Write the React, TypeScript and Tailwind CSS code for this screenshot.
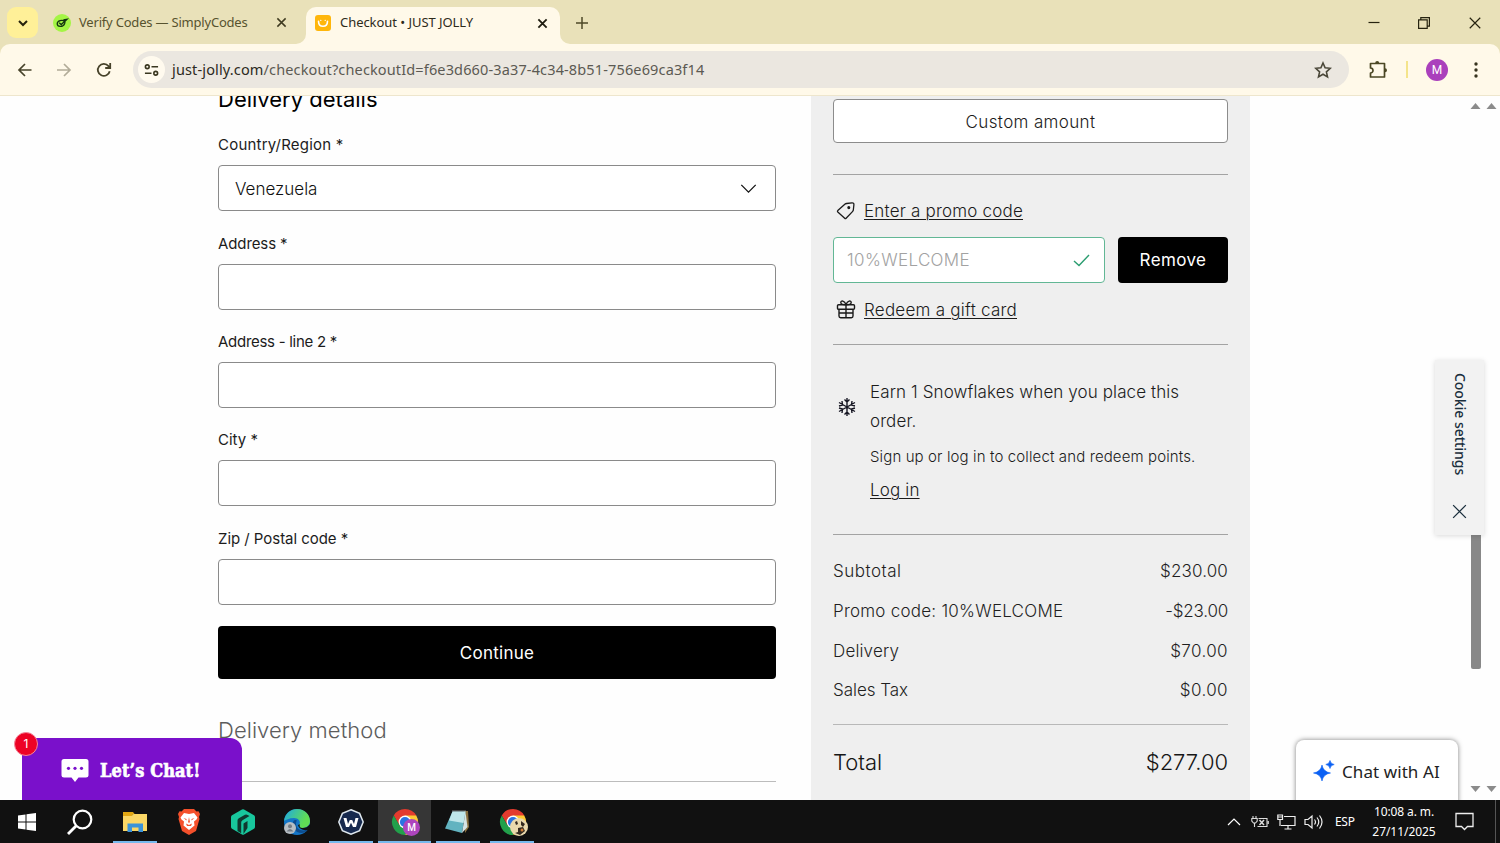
import React from "react";

const ui = "font-['Noto_Sans',sans-serif]";

function CloseX({ className = "", sw = 1.6 }: { className?: string; sw?: number }) {
  return (
    <svg viewBox="0 0 12 12" className={className} fill="none" stroke="currentColor" strokeWidth={sw}>
      <path d="M1.5 1.5l9 9M10.5 1.5l-9 9" />
    </svg>
  );
}

function TabStrip() {
  return (
    <div className={`relative flex h-[44px] shrink-0 items-center bg-[#e9e1b9] pl-[7px] pt-px ${ui}`}>
      <div className="flex h-[31px] w-[31px] items-center justify-center rounded-[9px] bg-[#fff098]">
        <svg viewBox="0 0 12 12" className="h-3 w-3" fill="none" stroke="#26220c" strokeWidth="2"><path d="M2 4l4 4 4-4" /></svg>
      </div>
      <svg viewBox="0 0 18 18" className="ml-[15px] h-[18px] w-[18px]">
        <circle cx="9" cy="9" r="9" fill="#a4f545" />
        <path d="M11.800 7.500C9.500 5.200 4.200 6.600 4.200 9.800c0 3.300 5.800 3.600 7.300.2.500-1 .6-1.600.3-2.500zM6.200 8.800l2 1.800 5.800-5.300-3.600.6M12 7.200l2-1.900" fill="none" stroke="#143510" strokeWidth="1.300" />
      </svg>
      <span className="ml-[8px] w-[191px] whitespace-nowrap text-[13px] tracking-[-0.2px] text-[#57532f]">Verify Codes — SimplyCodes</span>
      <CloseX className="ml-[6px] h-[11px] w-[11px] text-[#3f3b20]" />
      <div className="relative ml-[19px] flex h-[37px] w-[254px] items-center self-end rounded-t-[10px] bg-[#fff9e9] pl-[9px]">
        <svg viewBox="0 0 10 10" className="absolute bottom-0 left-[-10px] h-[10px] w-[10px]"><path d="M10 0v10H0A10 10 0 0 0 10 0z" fill="#fff9e9" /></svg>
        <svg viewBox="0 0 10 10" className="absolute bottom-0 right-[-10px] h-[10px] w-[10px]"><path d="M0 0v10h10A10 10 0 0 1 0 0z" fill="#fff9e9" /></svg>
        <div className="flex w-full items-center pb-[5px]">
          <svg viewBox="0 0 16 16" className="h-4 w-4">
            <rect width="16" height="16" rx="3" fill="#ffb60a" />
            <path d="M3.500 6.200c.2 6.800 8.800 6.800 9 0" fill="none" stroke="#fff" strokeWidth="1.600" strokeLinecap="round" />
            <path d="M5.700 5.300h.2M10.100 5.300h.2" stroke="#fff" strokeWidth="1.200" strokeLinecap="round" />
          </svg>
          <span className="ml-[9px] w-[190px] whitespace-nowrap text-[13px] tracking-[-0.05px] text-[#2e2b1a]">Checkout • JUST JOLLY</span>
          <CloseX className="ml-[7px] h-[11px] w-[11px] text-[#1f1d10]" sw={2} />
        </div>
      </div>
      <svg viewBox="0 0 12 12" className="ml-[16px] h-3 w-3" stroke="#4d4827" strokeWidth="1.500"><path d="M6 0v12M0 6h12" /></svg>
      <div className="ml-auto flex items-center pr-[18px] text-[#26230f]">
        <svg viewBox="0 0 12 12" className="h-3 w-3" stroke="currentColor"><path d="M0.500 5.500h11" strokeWidth="1.200" /></svg>
        <svg viewBox="0 0 12 12" className="ml-[38px] h-3 w-3" fill="none" stroke="currentColor" strokeWidth="1.200"><path d="M.6 2.800h8.600v8.600H.6zM2.800 2.800V.6h8.600v8.600H9.200" /></svg>
        <CloseX className="ml-[38px] h-[14px] w-[14px]" sw={1} />
      </div>
    </div>
  );
}

function Toolbar() {
  return (
    <div className="shrink-0 bg-[#e9e1b9]">
      <div className={`flex h-[52px] items-center rounded-t-[10px] border-b border-[#eee6cd] bg-[#fff9e9] pl-[17px] pr-[15px] ${ui}`}>
        <svg viewBox="0 0 16 16" className="h-4 w-4" fill="none" stroke="#47432a" strokeWidth="1.700"><path d="M14.500 8H2M8 2L2 8l6 6" /></svg>
        <svg viewBox="0 0 16 16" className="ml-[23px] h-4 w-4" fill="none" stroke="#b2ac98" strokeWidth="1.700"><path d="M1 8h13M8 2l6 6-6 6" /></svg>
        <svg viewBox="0 0 16 16" className="ml-[24px] h-4 w-4" fill="none" stroke="#47432a" strokeWidth="1.800"><path d="M13.700 9.200A6 6 0 1 1 12.500 4.100L14 5.800M14.200 1v5H9.200" /></svg>
        <div className="ml-[21px] flex h-[37px] w-[1216px] items-center rounded-full bg-[#ebe7e0] pl-[5px] pr-[17px]">
          <div className="flex h-[27px] w-[27px] items-center justify-center rounded-full bg-[#fffaee]">
            <svg viewBox="0 0 16 14" className="h-[14px] w-[15px]" fill="none" stroke="#3a3720" strokeWidth="1.700"><circle cx="3.500" cy="3.500" r="2" /><path d="M8 3.500h7M1 10.500h7" /><circle cx="12.500" cy="10.500" r="2" /></svg>
          </div>
          <span className="ml-[7px] whitespace-nowrap text-[14.5px] tracking-[0.14px] text-[#5c5a53]"><span className="text-[#2c2a22]">just-jolly.com</span>/checkout?checkoutId=f6e3d660-3a37-4c34-8b51-756e69ca3f14</span>
          <svg viewBox="0 0 18 18" className="ml-auto h-[18px] w-[18px]" fill="none" stroke="#4a4738" strokeWidth="1.600"><path d="M9 2l2.100 4.800 5.200.5-3.900 3.500 1.100 5.100L9 13.200l-4.500 2.700 1.100-5.100-3.900-3.500 5.200-.5z" /></svg>
        </div>
        <svg viewBox="0 0 20 20" className="ml-[19px] h-[20px] w-[20px]" fill="none" stroke="#4b4724" strokeWidth="1.700"><path d="M2.500 3.500h14v13.500h-14v-4a2.400 2.400 0 0 0 0-5z" strokeLinejoin="round" /><path d="M7.200 3a2 2 0 0 1 4 0zM17 8.300a2 2 0 0 1 0 4z" fill="#4b4724" stroke="none" /></svg>
        <div className="ml-[18px] h-[17px] w-[2px] bg-[#f4e48b]" />
        <div className="ml-[18px] flex h-[22px] w-[22px] items-center justify-center rounded-full bg-[#aa40bc] font-['Roboto',sans-serif] text-[12px] text-white">M</div>
        <svg viewBox="0 0 4 16" className="ml-auto mr-[7px] h-4 w-1" fill="#37341e"><circle cx="2" cy="2" r="1.700" /><circle cx="2" cy="8" r="1.700" /><circle cx="2" cy="14" r="1.700" /></svg>
      </div>
    </div>
  );
}

function Field({ label, children, track }: { label: string; children?: React.ReactNode; track: string }) {
  return (
    <div className="flex flex-col gap-[10px]">
      <label className={`h-5 whitespace-nowrap text-[15px] leading-5 text-[#1c1c1c] ${track}`}>{label}</label>
      <div className="flex h-[46px] items-center justify-between rounded-[4px] border border-[#8a8a8a] bg-white px-4">{children}</div>
    </div>
  );
}

function DeliveryForm() {
  return (
    <section className="ml-[218px] flex w-[558px] shrink-0 flex-col">
      <h2 className="mt-[-12px] h-[30px] text-[22px] leading-[30px] text-black">Delivery details</h2>
      <div className="mt-[21.4px] flex flex-col gap-[22.3px]">
        <Field label="Country/Region *" track="tracking-[0.22px]">
          <span className="pt-[3px] text-[17px] font-[360] text-[#111]">Venezuela</span>
          <svg viewBox="0 0 18 10" className="mr-[2px] h-[9px] w-[17px]" fill="none" stroke="#111" strokeWidth="1.400"><path d="M1 1l8 8 8-8" /></svg>
        </Field>
        <Field label="Address *" track="tracking-[-0.1px]" />
        <Field label="Address - line 2 *" track="tracking-[-0.28px]" />
        <Field label="City *" track="tracking-[0px]" />
        <Field label="Zip / Postal code *" track="tracking-[-0.04px]" />
      </div>
      <button className="mt-[21.800px] h-[52.500px] shrink-0 rounded-[4px] bg-black pt-[3px] text-[17px] tracking-[0.25px] text-white">Continue</button>
      <h2 className="mt-[36px] h-[30px] text-[22px] font-light leading-[30px] tracking-[0.06px] text-[#5c5c5c]">Delivery method</h2>
      <div className="mt-[36.500px] h-px shrink-0 bg-[#bcbcbc]" />
    </section>
  );
}

function Row({ a, b, ta, tb }: { a: string; b: string; ta: string; tb: string }) {
  return (
    <div className="flex h-[24px] items-center justify-between text-[17px] text-[#1f1f1f]">
      <span className={ta}>{a}</span>
      <span className={tb}>{b}</span>
    </div>
  );
}

function Summary() {
  return (
    <aside className="ml-[35px] flex h-[704px] w-[439px] shrink-0 flex-col bg-[#efefef] px-[22px] pt-[3px] font-[330] text-[#1b1b1b]">
      <button className="h-[44px] shrink-0 rounded-[4px] border border-[#8c8c8c] bg-white pt-[3px] text-[17px] tracking-[0.36px]">Custom amount</button>
      <div className="mt-[31px] h-px shrink-0 bg-[#a3a3a3]" />
      <div className="mt-[24px] flex h-6 items-center pl-[3px] text-[17px]">
        <svg viewBox="0 0 20 20" className="h-[20px] w-[20px]" fill="none" stroke="#1a1a1a" strokeWidth="1.300" strokeLinejoin="round"><path d="M10.500 2.500 16 1.900q2-.1 1.900 1.800l-.6 5.500q-.1.700-.6 1.200l-6.600 6.800q-.7.700-1.400 0L1.800 11q-.7-.7 0-1.400l7.300-6.500q.6-.5 1.400-.6z" /><circle cx="12.800" cy="6.600" r=".9" fill="#1a1a1a" /></svg>
        <span className="ml-[8px] pt-[2px] tracking-[0.2px] underline decoration-1 underline-offset-2">Enter a promo code</span>
      </div>
      <div className="mt-[14px] flex h-[46px] shrink-0 gap-[13px]">
        <div className="flex w-[272px] items-center justify-between rounded-[4px] border border-[#62b795] bg-white pl-[13px] pr-[14px] text-[17px] text-[#a2a2a2]">
          <span className="pt-[2px] tracking-[0.35px]">10%WELCOME</span>
          <svg viewBox="0 0 17 13" className="h-[13px] w-[17px]" fill="none" stroke="#2b9d70" strokeWidth="1.400"><path d="M1 7l5 4.500L16 1" /></svg>
        </div>
        <button className="flex-1 rounded-[4px] bg-black pt-[2px] text-[17px] font-normal tracking-[0.4px] text-white">Remove</button>
      </div>
      <div className="mt-[15px] flex h-6 items-center pl-[3px] text-[17px]">
        <svg viewBox="0 0 20 20" className="h-[20px] w-[20px]" fill="none" stroke="#1a1a1a" strokeWidth="1.400" strokeLinejoin="round"><rect x="1.500" y="4.700" width="17" height="4.600" rx="1" /><path d="M3 9.300v6.700q0 1.700 1.700 1.700h10.600q1.700 0 1.700-1.700V9.300M10 4.700v13M3 13h14M10 4.700C8.500 .5 4.800.1 4.800 2.500q0 2.200 5.200 2.200C11.500.5 15.200.1 15.200 2.500q0 2.200-5.200 2.200" /></svg>
        <span className="ml-[8px] pt-[2px] tracking-[0.24px] underline decoration-1 underline-offset-2">Redeem a gift card</span>
      </div>
      <div className="mt-[22px] h-px shrink-0 bg-[#a3a3a3]" />
      <div className="mt-[33px] flex h-[124px] shrink-0">
        <svg viewBox="0 0 20 20" className="ml-[4px] mt-[19px] h-[20px] w-[20px] shrink-0" fill="none" stroke="#161622" strokeWidth="1.400"><path d="M10 1v18M2 5.500l16 9M18 5.500l-16 9M7.500 2.500L10 5l2.500-2.500M7.500 17.500L10 15l2.500 2.500M2 9l3.500-1L5 4M15 4l-.5 4L18 9M2 11l3.500 1L5 16M15 16l-.5-4 3.500-1" /></svg>
        <div className="ml-[13px] flex flex-col whitespace-nowrap text-[17px] leading-[28.5px]">
          <p className="tracking-[0.1px]">Earn 1 Snowflakes when you place this<br />order.</p>
          <p className="mt-[12px] text-[15px] leading-5 tracking-[0.12px] text-[#1b1b1b]">Sign up or log in to collect and redeem points.</p>
          <a className="mt-[11px] leading-6 tracking-[0.15px] underline decoration-1 underline-offset-2">Log in</a>
        </div>
      </div>
      <div className="mt-[32px] h-px shrink-0 bg-[#a3a3a3]" />
      <div className="mt-[25px] flex flex-col gap-[15.7px]">
        <Row a="Subtotal" b="$230.00" ta="tracking-[0.5px]" tb="tracking-[0.15px]" />
        <Row a="Promo code: 10%WELCOME" b="-$23.00" ta="tracking-[0.24px]" tb="tracking-[-0.2px]" />
        <Row a="Delivery" b="$70.00" ta="tracking-[0.15px]" tb="tracking-[0.4px]" />
        <Row a="Sales Tax" b="$0.00" ta="tracking-[-0.05px]" tb="tracking-[0.4px]" />
      </div>
      <div className="mt-[21px] h-px shrink-0 bg-[#b8b8b8]" />
      <div className="mt-[22px] flex h-[30px] items-center justify-between text-[22px] text-[#161616]"><span>Total</span><span className="tracking-[-0.05px]">$277.00</span></div>
    </aside>
  );
}

function Arrow({ down = false }: { down?: boolean }) {
  return <svg viewBox="0 0 10 6" className="h-[6px] w-[11px]" fill="#8b8b8b"><path d={down ? "M0 0h10L5 6z" : "M0 6h10L5 0z"} /></svg>;
}

function Page() {
  return (
    <main className="relative flex h-[704px] shrink-0 overflow-hidden bg-[#fefefe] font-['Inter',sans-serif]">
      <DeliveryForm />
      <Summary />
      <div className="ml-auto flex h-full pr-px">
        <div className="flex w-[16px] flex-col items-center justify-between pb-[8px] pt-[7px]"><Arrow /><Arrow down /></div>
        <div className="flex w-[16px] flex-col items-center justify-between pb-[8px] pt-[7px]"><Arrow /><Arrow down /></div>
      </div>
      <div className="absolute left-[1471px] top-[430px] h-[143px] w-[10px] rounded-b-[2px] bg-[#888]" />
      <div className="absolute left-[1435px] top-[264px] flex h-[175px] w-[49px] flex-col items-center bg-[#f2f2f2] pt-[13px] shadow-[0_1px_5px_rgba(0,0,0,0.15)]">
        <span className="h-[104px] whitespace-nowrap font-['Noto_Sans',sans-serif] text-[14px] font-medium leading-5 tracking-[-0.05px] text-[#1b2f3d] [writing-mode:vertical-rl]">Cookie settings</span>
        <CloseX className="mt-[26px] h-[17px] w-[17px] text-[#1b2f3d]" sw={0.9} />
      </div>
      <div className="absolute left-[22px] top-[642px] flex h-[62px] w-[220px] items-center rounded-tr-[12px] bg-[#7a10cb] pl-[39px]">
        <svg viewBox="0 0 28 25" className="mt-[3px] h-[25px] w-[28px]"><path d="M3 1h22q2.500 0 2.500 2.500v14q0 2-2.500 2h-7.500L14 24l-3.500-4.500H3q-2.500 0-2.500-2v-14Q.5 1 3 1z" fill="#fff" /><g fill="#7a10cb"><circle cx="7.500" cy="10.300" r="1.600" /><circle cx="14" cy="10.300" r="1.600" /><circle cx="20.500" cy="10.300" r="1.600" /></g></svg>
        <span className="ml-[11px] whitespace-nowrap pt-[3px] font-['DejaVu_Serif_Condensed','DejaVu_Serif',serif] text-[18px] font-bold tracking-[0.1px] text-white [-webkit-text-stroke:0.6px_white]">Let’s Chat!</span>
      </div>
      <div className="absolute left-[14px] top-[636px] flex h-[24px] w-[24px] items-center justify-center rounded-full border border-[#f3889b] bg-[#ed0325] text-[12px] text-white">1</div>
      <div className={`absolute left-[1296px] top-[644px] flex h-[70px] w-[162px] items-start rounded-t-[8px] bg-white pl-[17px] pt-[20px] shadow-[0_0_5px_rgba(0,0,0,0.5)] ${ui}`}>
        <svg viewBox="0 0 22 22" className="h-[22px] w-[22px]" fill="#0b61f4"><path d="M9 5q1.200 6.800 8.500 8Q10.200 14.200 9 21 7.800 14.200.5 13 7.800 11.800 9 5zM17 .5q.6 3.400 4.200 4-3.600.6-4.200 4-.6-3.400-4.200-4 3.600-.6 4.200-4z" stroke="#0b61f4" strokeWidth=".6" /></svg>
        <span className="ml-[7px] whitespace-nowrap text-[17px] leading-6 tracking-[0.08px] text-[#222]">Chat with AI</span>
      </div>
    </main>
  );
}

function ChromeLogo() {
  return (
    <svg viewBox="0 0 28 28" className="h-[28px] w-[28px]">
      <path d="M14 14L2.740 7.500A13 13 0 0 1 25.260 7.500z" fill="#e33b2e" />
      <path d="M14 7.500h11.260L19.700 17.200zM8.400 17.200L2.740 7.500 14 7.500z" fill="#e33b2e" />
      <path d="M14 7.500h11.260A13 13 0 0 1 14 27l5.700-9.800z" fill="#fcc934" />
      <path d="M8.400 17.200L2.740 7.500A13 13 0 0 0 14 27l5.700-9.800z" fill="#22a04b" />
      <circle cx="14" cy="14" r="6.400" fill="#fff" /><circle cx="14" cy="14" r="5.100" fill="#2b74e2" />
    </svg>
  );
}

function Slot({ children, className = "" }: { children: React.ReactNode; className?: string }) {
  return <div className={`relative flex h-[43px] shrink-0 items-center justify-center ${className}`}>{children}</div>;
}

function Bar({ className = "" }: { className?: string }) {
  return <div className={`absolute bottom-0 h-[2px] bg-[#76b9ed] ${className}`} />;
}

function Taskbar() {
  return (
    <footer className={`flex h-[43px] shrink-0 items-center bg-[#111] text-white ${ui}`}>
      <Slot className="w-[53px]">
        <svg viewBox="0 0 18 18" className="h-[18px] w-[18px]" fill="#fff"><path d="M0 2.500L7.500 1.500V8.500H0zM8.500 1.300L18 0v8.500H8.500zM0 9.500h7.500v7L0 15.500zM8.500 9.500H18V18l-9.500-1.300z" /></svg>
      </Slot>
      <Slot className="w-[54px]">
        <svg viewBox="0 0 26 26" className="h-[26px] w-[26px]" fill="none" stroke="#fff" strokeWidth="2.200"><circle cx="15.500" cy="10.500" r="8.800" /><path d="M9 17l-8 8" strokeWidth="2.800" /></svg>
      </Slot>
      <Slot className="w-[56px]">
        <svg viewBox="0 0 24 20" className="h-[20px] w-[24px]"><path d="M0 0h10l2 2.500h-2L8 5H0z" fill="#e2a713" /><path d="M0 4h8.500l2-2H24v17H0z" fill="#fbd766" /><path d="M4.500 20v-8.500H20V20h-4.500v-4.500H9V20z" fill="#3b93d9" /></svg>
        <Bar className="left-[6px] w-[44px]" />
      </Slot>
      <Slot className="w-[52px]">
        <svg viewBox="0 0 22 26" className="h-[26px] w-[22px]"><path d="M6 0h10l2.500 2.500 2-.2L22 5l-1 3 .5 2-3.500 12L11 26l-7-4L.5 10 1 8 0 5l1.500-2.700 2 .2z" fill="#f4502b" /><path d="M6 4l5 1 5-1 3.500 4.500-1 2-2.500 2 .5 4L11 21l-5.500-4.500.5-4-2.500-2-1-2z" fill="#fff" /><path d="M5.500 9l3 1v1.500zM16.500 9l-3 1v1.500zM11 8l1 5.500h-2zM8 14.500l3 1.500 3-1.500-1 2.500h-4z" fill="#f4502b" /></svg>
      </Slot>
      <Slot className="w-[56px]">
        <svg viewBox="0 0 24 26" className="h-[26px] w-[24px]"><path d="M11 .5q1-.6 2 0l10 5.700q1 .6 1 2v9.600q0 1.400-1 2l-10 5.700q-1 .6-2 0L1 19.800q-1-.6-1-2V8.200q0-1.400 1-2z" fill="#18c79d" /><path d="M6.500 22V11.500q0-1.500 1.300-2.300L14 5.800q1.300-.7 2.600.1l1.900 1.200-7 4.200q-1.300.8-1.300 2.300v10.600z" fill="#10382f" /><path d="M12.500 19.500v-5l4-2.500v4.800zM12.500 19.500l4-2.700V19l-4 6z" fill="#10382f" /></svg>
      </Slot>
      <Slot className="w-[52px]">
        <svg viewBox="0 0 28 28" className="h-[28px] w-[28px]">
          <defs><linearGradient id="edge" x1="0" y1="0" x2="1" y2=".4"><stop offset="0" stopColor="#1ca9e6" /><stop offset=".9" stopColor="#60dc55" /></linearGradient></defs>
          <circle cx="14" cy="14" r="13" fill="#1375c7" />
          <path d="M1 13C2 5 8 1 14 1c8 0 13 6 13 12 0 5-4 7-8 7-3 0-4-2-2.500-4 1.500-3-1.500-6-5.500-6-5 0-8 2-10 3z" fill="url(#edge)" />
          <path d="M10.500 13c-3 6 2 12 8 12 3 0 5-1.200 6.500-3.500-7 2.500-12-.5-12-6 0-2 1-3 1-3-.5-.6-2.500-1-3.500.5z" fill="#0e4d8e" />
          <path d="M17 16.200c-1 2.200 0 3.800 2.500 3.800 3 0 5.500-1 7-3.500l1.500 1-2.500 4.300c-5 1.200-9.500-.8-10.500-4.800z" fill="#111" />
          <circle cx="7" cy="20" r="6" fill="#b7bec4" /><circle cx="7" cy="18.300" r="2" fill="#747c84" /><path d="M3.500 23.500q3.500-5 7 0z" fill="#747c84" />
        </svg>
      </Slot>
      <Slot className="w-[55px]">
        <svg viewBox="0 0 26 26" className="h-[26px] w-[26px]"><path d="M13 .8l8.600 3.600 3.600 8.600-3.600 8.600-8.600 3.600-8.600-3.600L.8 13l3.600-8.600z" fill="#16294e" stroke="#dfe8ef" strokeWidth="1.500" /><path d="M5.500 9h3l1.500 6 1.800-4h2.400l1.800 4 1.500-6h3L18 18h-3l-2-4.200L11 18H8z" fill="#fff" /></svg>
        <Bar className="left-[6px] w-[44px]" />
      </Slot>
      <Slot className="w-[53px] bg-[#363636]">
        <ChromeLogo />
        <div className="absolute left-[25px] top-[19px] flex h-[17px] w-[17px] items-center justify-center rounded-full bg-[#ad45bd] font-['Roboto',sans-serif] text-[10px] font-medium">M</div>
        <Bar className="left-0 w-full" />
      </Slot>
      <Slot className="w-[55px]">
        <svg viewBox="0 0 26 26" className="mr-[4px] h-[26px] w-[26px]"><path d="M20 2h4l1 16-4 6z" fill="#8a703f" /><path d="M8.500 2.500h13L18 24 1 19.500z" fill="#62b3c0" /><path d="M8.500 2.500h13L19.500 14 5 11.500z" fill="#bfe6ea" /><path d="M21.500 3l2 15-5.500 6z" fill="#d6e3e4" /><path d="M8.500 2h14" stroke="#a0a0a0" strokeWidth="1.500" strokeDasharray="1 1" /></svg>
        <Bar className="left-[5px] w-[44px]" />
      </Slot>
      <Slot className="w-[54px]">
        <ChromeLogo />
        <svg viewBox="0 0 18 18" className="absolute left-[24px] top-[18px] h-[18px] w-[18px]"><circle cx="9" cy="9" r="9" fill="#ead9ad" /><path d="M5 4l2-1 1 3-2 1zM11 3l4 3-2 3-2-2zM5 9l2 1M8 10l5-1 2 4-5 4-5-2 3-1z" fill="#342a20" /><circle cx="12" cy="12" r="1.500" fill="#cf7d37" /></svg>
        <Bar className="left-[4px] w-[44px]" />
      </Slot>
      <div className="ml-auto flex h-full items-center">
        <svg viewBox="0 0 14 8" className="h-[8px] w-[14px]" fill="none" stroke="#fff" strokeWidth="1.200"><path d="M1 7l6-6 6 6" /></svg>
        <svg viewBox="0 0 18 14" className="ml-[10px] h-[14px] w-[18px]" fill="none" stroke="#ddd" strokeWidth="1.100"><path d="M2 1v2.500M5 1v2.500M.8 3.500h5.400v2.500l-1.700 2h-2l-1.700-2zM3.500 8v4M7.500 3.500h8.500v8H6.500M17.300 6v3" /><path d="M8.500 5l4.500 5M13 5l-4.500 5" strokeWidth="1.500" /></svg>
        <svg viewBox="0 0 19 16" className="ml-[8px] h-[16px] w-[19px]" fill="none" stroke="#eee" strokeWidth="1.200"><path d="M7 2.500h11v9H4M11 11.500V15M7.500 15h7M.8 1h4.700v4.500H.8zM3 5.500V12M1 3h4" /></svg>
        <svg viewBox="0 0 19 16" className="ml-[8px] h-[16px] w-[19px]" fill="none" stroke="#eee" strokeWidth="1.200"><path d="M1 5.500h3L8 2v12l-4-3.500H1zM10.500 5.500q2 2.500 0 5M13 3.500q3.500 4.500 0 9M15.500 1.500q5 6.500 0 13" /></svg>
        <span className="ml-[12px] w-[21px] whitespace-nowrap text-[12px] tracking-[-0.3px]">ESP</span>
        <div className="ml-[13px] flex w-[70px] flex-col items-center whitespace-nowrap text-[12px] leading-[19.500px]"><span className="tracking-[-0.1px]">10:08 a. m.</span><span className="tracking-[-0.05px]">27/11/2025</span></div>
        <svg viewBox="0 0 19 19" className="ml-[16px] h-[19px] w-[19px]" fill="none" stroke="#eee" strokeWidth="1.300"><path d="M1 1.500h17v13h-5.500L9.500 17.500l-3-3H1z" /></svg>
        <div className="ml-[21px] mr-[4px] h-full w-px bg-[#555]" />
      </div>
    </footer>
  );
}

export default function App() {
  return (
    <div className="flex h-[843px] w-[1500px] flex-col overflow-hidden">
      <TabStrip />
      <Toolbar />
      <Page />
      <Taskbar />
    </div>
  );
}
